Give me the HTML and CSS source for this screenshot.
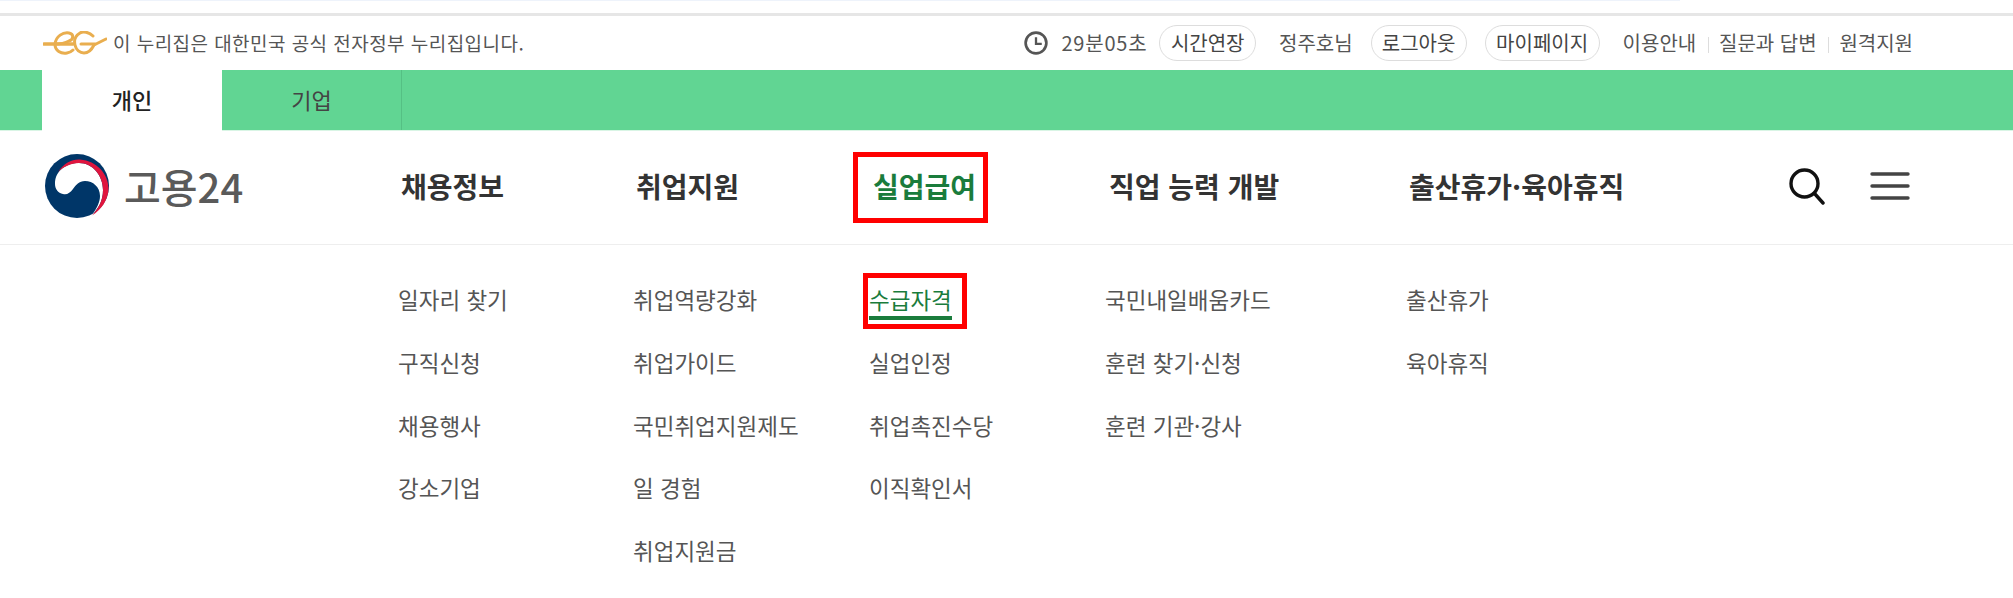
FILE: index.html
```html
<!DOCTYPE html>
<html lang="ko">
<head>
<meta charset="utf-8">
<title>고용24</title>
<link rel="stylesheet" href="styles.css">
</head>
<body>
<div class="browser-edge"><div class="edge-tint"></div></div>
<div class="util">
  <div class="gov">
    <svg class="eg" width="64" height="24" viewBox="0 0 64 24" fill="none" stroke="#e9ae4f" stroke-linecap="round"><path d="M1 13H30" stroke-width="3.4"/><path d="M12 13C13 5 20 1 26 2C31 3 31 8 26 10C22 12 18 13 12 13M12 13C12 20 18 23 24 22C27 21.5 29 20 30 19" stroke-width="3"/><path d="M50 5C46 1 40 0 37 2C32 5 31 10 32 14C33 19 37 22 41 22C46 22 49 18 51 14L63 8" stroke-width="3"/><path d="M38 13H52" stroke-width="3"/></svg>
    <span class="gov-text">이 누리집은 대한민국 공식 전자정부 누리집입니다.</span>
  </div>
  <div class="session">
    <svg class="clock" width="24" height="24" viewBox="0 0 25 25" fill="none" stroke="#555" stroke-width="2.8"><circle cx="12.5" cy="12.5" r="10.8"/><path d="M12.5 6.5V13.5H18.5" stroke-width="2.4"/></svg>
    <span class="timer">29분05초</span>
    <a class="pill pill-time">시간연장</a>
    <span class="user">정주호님</span>
    <a class="pill pill-out">로그아웃</a>
    <a class="pill pill-my">마이페이지</a>
    <ul class="links"><li>이용안내</li><li>질문과 답변</li><li>원격지원</li></ul>
  </div>
</div>
<div class="tabs">
  <a class="tab tab-on">개인</a>
  <a class="tab">기업</a>
</div>
<header class="head">
  <div class="logo">
    <svg width="64" height="64" viewBox="0 0 64 64"><circle cx="32" cy="32" r="32" fill="#003668"/><path d="M10 30C10 16 22 9 34 9C48 9 58 22 58 36C58 47 53 55 47 61C52 54 55 48 55 42C55 33 48 27 40 27C34 27 31 31 28 35C25 39 22 41 18 40C13 39 10 35 10 30Z" fill="#fff"/><path d="M13 18C19 9 27 5 35 5.5C52 7 63 20 63.5 34C63.5 46 56 56 47 61.5C53 55 58 47 58 36C58 22 48 9 34 9C26 9 18 13 13 18Z" fill="#e0153e"/></svg>
    <span class="logo-text">고용24</span>
  </div>
  <nav class="gnb">
    <a class="gnb-item w1">채용정보</a>
    <a class="gnb-item w2">취업지원</a>
    <a class="gnb-item w3 active">실업급여</a>
    <a class="gnb-item w4">직업 능력 개발</a>
    <a class="gnb-item w5">출산휴가·육아휴직</a>
  </nav>
  <div class="tools">
    <svg width="36" height="37" viewBox="0 0 36 37" fill="none" stroke="#111" stroke-width="3.4" stroke-linecap="round"><circle cx="15.5" cy="15.5" r="13.5"/><path d="M25.5 25.5L34 35"/></svg>
    <svg width="40" height="30" viewBox="0 0 40 30" fill="none" stroke="#444" stroke-width="3.4" stroke-linecap="round"><path d="M2 3H38M2 15H38M2 27H38"/></svg>
  </div>
</header>
<section class="sub">
  <ul class="col w1"><li>일자리 찾기</li><li>구직신청</li><li>채용행사</li><li>강소기업</li></ul>
  <ul class="col w2"><li>취업역량강화</li><li>취업가이드</li><li>국민취업지원제도</li><li>일 경험</li><li>취업지원금</li></ul>
  <ul class="col w3"><li class="current"><span>수급자격</span></li><li>실업인정</li><li>취업촉진수당</li><li>이직확인서</li></ul>
  <ul class="col w4"><li>국민내일배움카드</li><li>훈련 찾기·신청</li><li>훈련 기관·강사</li></ul>
  <ul class="col w5"><li>출산휴가</li><li>육아휴직</li></ul>
</section>
</body>
</html>
```
FILE: styles.css
```css
*, *::before, *::after { box-sizing: border-box; }
html, body { margin: 0; padding: 0; }
body { width: 2013px; height: 598px; overflow: hidden; background: #fff; color: #333; font-family: "Noto Sans CJK KR", "Noto Sans", sans-serif; }
ul { list-style: none; margin: 0; padding: 0; }
.browser-edge { height: 16px; border-bottom: 3px solid #e6e6e6; }
.edge-tint { width: 1680px; height: 1px; background: #eef3fb; }
.util { height: 54px; padding: 0 100px 0 43px; display: flex; justify-content: space-between; align-items: center; font-size: 20px; color: #555; }
.gov { display: flex; align-items: center; gap: 6px; }
.gov-text { font-size: 19px; letter-spacing: 0.45px; padding-bottom: 2px; }
.session { display: flex; align-items: center; }
.clock { margin-right: 13px; }
.timer { letter-spacing: 0.8px; padding-bottom: 2px; }
.pill { height: 36px; padding: 0 10.5px 2px; margin-left: 12px; display: flex; align-items: center; border: 1px solid #ddd; border-radius: 18px; color: #444; }
.user { margin-left: 23px; padding-bottom: 2px; }
.pill-out { margin-left: 18px; padding: 0 10.2px 2px; }
.pill-my { margin-left: 18px; }
.links { display: flex; margin-left: 23px; padding-bottom: 2px; }
.links li { position: relative; padding: 0 11.4px; }
.links li:first-child { padding-left: 0; }
.links li:last-child { padding-right: 0; }
.links li + li::before { content: ""; position: absolute; left: 0; top: 9px; height: 16px; width: 1px; background: #ddd; }
.tabs { height: 61px; padding-left: 42px; display: flex; background: #61d593; border-bottom: 1px solid #d9f5e5; }
.tab { width: 180px; height: 60px; padding-bottom: 3px; display: flex; align-items: center; justify-content: center; font-size: 22px; color: #444; border-right: 1px solid #55c084; }
.tab-on { height: 61px; background: #fff; color: #222; font-weight: 500; border-right: 0; }
.head { height: 114px; display: flex; align-items: center; padding: 0 103px 3px 45px; border-bottom: 1px solid #eee; }
.logo { width: 356px; display: flex; align-items: center; gap: 15px; }
.logo-text { font-size: 40px; font-weight: 500; color: #5a5a5a; line-height: 1; }
.gnb { display: flex; align-items: center; margin-top: -1px; }
.gnb-item { font-size: 28px; font-weight: 700; color: #333; line-height: 40px; }
.w1 { width: 235px; }
.w2 { width: 237px; }
.w3 { width: 236px; }
.w4 { width: 300px; }
.w5 { width: 300px; }
.active { color: #1a7c3c; position: relative; }
.active::after { content: ""; position: absolute; left: -20px; top: -14px; width: 135px; height: 71px; border: 5px solid #f00; }
.tools { margin-left: auto; display: flex; align-items: center; gap: 45px; }
.sub { display: flex; padding: 23px 0 0 398px; }
.col li { height: 62.75px; font-size: 22.5px; line-height: 62.75px; color: #555; }
.col.w2 { width: 236px; }
.col.w4 { width: 301px; }
.current { color: #1a7c3c !important; position: relative; }
.current span { display: inline-block; line-height: 30px; border-bottom: 4px solid #1a7c3c; padding-bottom: 2px; }
.current::after { content: ""; position: absolute; left: -6px; top: 5px; width: 104px; height: 56px; border: 5px solid #f00; }
```
